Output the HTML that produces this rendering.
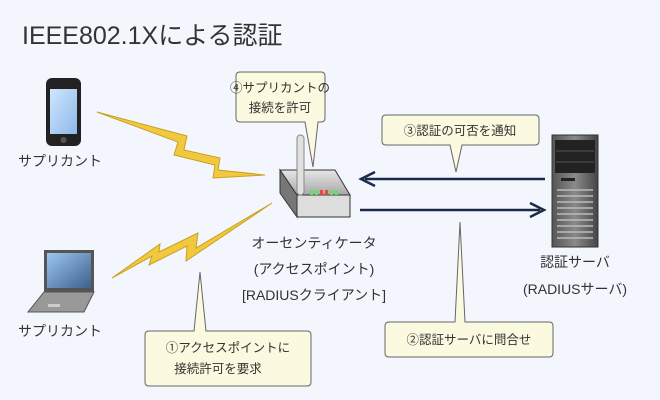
<!DOCTYPE html>
<html><head><meta charset="utf-8"><style>
html,body{margin:0;padding:0;background:#f3f6fd;}
svg{display:block;font-family:"Liberation Sans","Noto Sans CJK JP",sans-serif;}
</style></head><body>
<svg width="660" height="400" viewBox="0 0 660 400" xmlns="http://www.w3.org/2000/svg">
<defs>
<linearGradient id="scr" x1="0" y1="0" x2="1" y2="1"><stop offset="0" stop-color="#cfe6ff"/><stop offset="1" stop-color="#8fb8e8"/></linearGradient>
<linearGradient id="lap" x1="0" y1="0" x2="1" y2="1"><stop offset="0" stop-color="#9cc7f2"/><stop offset="1" stop-color="#3e5f8c"/></linearGradient>
<linearGradient id="rt" x1="0" y1="0" x2="0" y2="1"><stop offset="0" stop-color="#e6e6e6"/><stop offset="1" stop-color="#a8a8a8"/></linearGradient>
<linearGradient id="sv" x1="0" y1="0" x2="1" y2="0"><stop offset="0" stop-color="#555"/><stop offset=".5" stop-color="#8a8a8a"/><stop offset="1" stop-color="#444"/></linearGradient>
</defs>
<text x="22" y="44" font-size="25" fill="#333">IEEE802.1Xによる認証</text>

<!-- phone -->
<rect x="46" y="78" width="35" height="68" rx="6" fill="#222"/>
<rect x="50" y="89" width="27" height="45" fill="url(#scr)"/>
<circle cx="63.5" cy="140" r="3" fill="#555"/>
<text x="18" y="166" font-size="14" fill="#333">サプリカント</text>

<!-- laptop -->
<rect x="44" y="250" width="50" height="42" fill="#555"/>
<rect x="47" y="253" width="44" height="35" fill="url(#lap)"/>
<polygon points="44,292 94,292 84,312 28,312" fill="#999" stroke="#555"/>
<rect x="48" y="304" width="12" height="3" fill="#ccc"/>
<text x="18" y="336" font-size="14" fill="#333">サプリカント</text>

<!-- bolts -->
<polygon points="97,112 178,142 174,155 215,165 213,178 265,175 218,170 220,158 184,150 187,136" fill="#f2c93e" stroke="#c9a120" stroke-width="1"/>
<polygon points="112,278 152,256 149,265 187,246 186,261 272,203 196,248 198,233 159,252 160,244" fill="#f2c93e" stroke="#c9a120" stroke-width="1"/>

<!-- router -->
<polygon points="280,170 335,170 350,195 297,195" fill="url(#rt)" stroke="#333"/>
<polygon points="297,195 350,195 350,217 297,217" fill="#ddd" stroke="#333"/>
<polygon points="280,170 297,195 297,217 280,193" fill="#777" stroke="#333"/>
<rect x="297" y="135" width="7" height="60" rx="3.5" fill="#e0e0e0" stroke="#888"/>
<rect x="310" y="190" width="3" height="5" fill="#6d6"/><rect x="315" y="190" width="3" height="5" fill="#6d6"/>
<rect x="320" y="190" width="3" height="5" fill="#e44"/><rect x="325" y="190" width="3" height="5" fill="#e44"/>
<rect x="330" y="190" width="3" height="5" fill="#6d6"/><rect x="335" y="190" width="3" height="5" fill="#6d6"/>
<text x="314" y="248" font-size="14" fill="#333" text-anchor="middle">オーセンティケータ</text>
<text x="314" y="274" font-size="14" fill="#333" text-anchor="middle">(アクセスポイント)</text>
<text x="314" y="300" font-size="14" fill="#333" text-anchor="middle">[RADIUSクライアント]</text>

<!-- arrows -->
<line x1="545" y1="179" x2="365" y2="179" stroke="#1c2a4a" stroke-width="2.5"/>
<polyline points="375,172 361,179 375,186" fill="none" stroke="#1c2a4a" stroke-width="2.5"/>
<line x1="360" y1="210" x2="540" y2="210" stroke="#1c2a4a" stroke-width="2.5"/>
<polyline points="530,203 544,210 530,217" fill="none" stroke="#1c2a4a" stroke-width="2.5"/>

<!-- server -->
<rect x="552" y="135" width="46" height="112" fill="url(#sv)" stroke="#333"/>
<rect x="555" y="140" width="40" height="33" fill="#222"/>
<line x1="556" y1="151" x2="594" y2="151" stroke="#555"/><line x1="556" y1="162" x2="594" y2="162" stroke="#555"/>
<g stroke="#bbb" stroke-width="1.5">
<line x1="557" y1="190" x2="593" y2="190"/><line x1="557" y1="196" x2="593" y2="196"/><line x1="557" y1="202" x2="593" y2="202"/>
<line x1="557" y1="208" x2="593" y2="208"/><line x1="557" y1="214" x2="593" y2="214"/><line x1="557" y1="220" x2="593" y2="220"/>
<line x1="557" y1="226" x2="593" y2="226"/><line x1="557" y1="232" x2="593" y2="232"/><line x1="557" y1="238" x2="593" y2="238"/>
</g>
<rect x="561" y="178" width="14" height="3" fill="#222"/>
<text x="575" y="267" font-size="14" fill="#333" text-anchor="middle">認証サーバ</text>
<text x="575" y="294" font-size="14" fill="#333" text-anchor="middle">(RADIUSサーバ)</text>

<!-- callouts -->
<g fill="#fbf9df" stroke="#666" stroke-width="1">
<path d="M240,72 H321 Q325,72 325,76 V118 Q325,122 321,122 H318 L313,167 L305,122 H240 Q236,122 236,118 V76 Q236,72 240,72 Z"/>
<path d="M386,115 H535 Q539,115 539,119 V141 Q539,145 535,145 H462 L456,172 L450,145 H386 Q382,145 382,141 V119 Q382,115 386,115 Z"/>
<path d="M389,322 H455 L460,222 L465,322 H549 Q553,322 553,326 V353 Q553,357 549,357 H389 Q385,357 385,353 V326 Q385,322 389,322 Z"/>
<path d="M149,331 H194 L200,272 L206,331 H307 Q311,331 311,335 V382 Q311,386 307,386 H149 Q145,386 145,382 V335 Q145,331 149,331 Z"/>
</g>
<g font-size="12.5" fill="#333">
<text x="280" y="92" text-anchor="middle">④サプリカントの</text>
<text x="280" y="112" text-anchor="middle">接続を許可</text>
<text x="460" y="135" text-anchor="middle">③認証の可否を通知</text>
<text x="469" y="344" text-anchor="middle">②認証サーバに問合せ</text>
<text x="228" y="352" text-anchor="middle">①アクセスポイントに</text>
<text x="218" y="373" text-anchor="middle">接続許可を要求</text>
</g>
</svg>
</body></html>
